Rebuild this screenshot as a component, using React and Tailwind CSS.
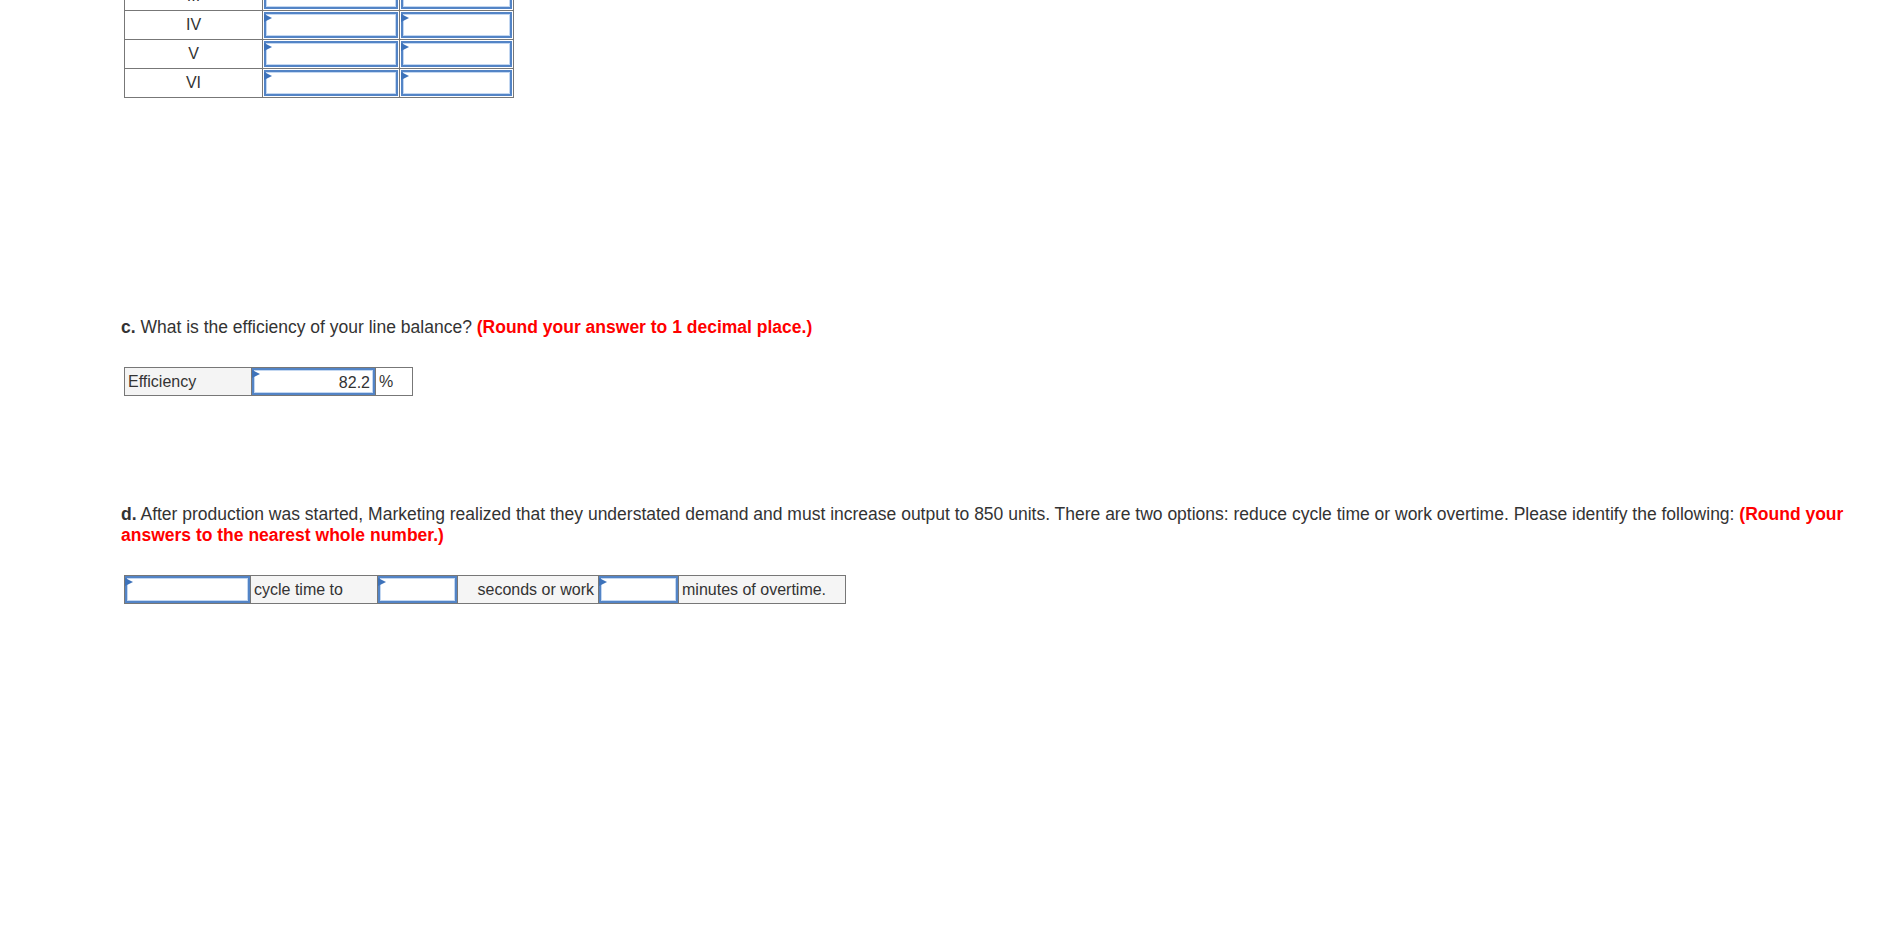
import React from 'react'

const font = { fontFamily: '"Liberation Sans", Arial, sans-serif' }

// campo de resposta azul com a setinha no canto
function Campo({ valor, className = '' }) {
  return (
    <div className={`relative h-full border-2 border-[#5384c6] bg-white shadow-[inset_0_0_0_1px_#c3d7f1] ${className}`}>
      <span className="absolute left-[-2px] top-0 z-10 h-0 w-0 border-y-[4px] border-l-[8px] border-y-transparent border-l-[#3d72ba]" />
      {valor && <span className="absolute right-[3px] top-[3px] text-[16px] leading-[20px] text-[#333]">{valor}</span>}
    </div>
  )
}

const linhas = ['III', 'IV', 'V', 'VI']

export default function App() {
  return (
    <div className="min-h-[925px] bg-white pl-[121px] pr-[30px] text-[16px] text-[#333]" style={font}>
      {/* Tabela de estações (parte de cima cortada) */}
      <table className="ml-[3px] mt-[-19px] border-collapse">
        <tbody>
          {linhas.map(l => (
            <tr key={l} className="h-[29px]">
              <td className="w-[138px] border border-[#777] p-0 text-center leading-[20px]">{l}</td>
              <td className="h-[29px] w-[137px] border border-[#777] p-px">
                <Campo />
              </td>
              <td className="h-[29px] w-[114px] border border-[#777] p-px">
                <Campo />
              </td>
            </tr>
          ))}
        </tbody>
      </table>

      {/* c. */}
      <p className="mt-[219px] text-[17.5px] leading-[21px]">
        <b>c.</b> What is the efficiency of your line balance?{' '}
        <b className="text-[#ff0000]">(Round your answer to 1 decimal place.)</b>
      </p>

      <div className="ml-[3px] mt-[29px] flex h-[29px] w-[289px] border border-[#777]">
        <div className="w-[127px] border-r border-[#777] bg-[#f4f4f4] pl-[3px] leading-[27px]">Efficiency</div>
        <div className="w-[124px] border-r border-[#777]">
          <Campo valor="82.2" />
        </div>
        <div className="flex-1 pl-[3px] leading-[27px]">%</div>
      </div>

      {/* d. */}
      <p className="mt-[108px] text-[17.5px] leading-[21px]">
        <b>d.</b> After production was started, Marketing realized that they understated demand and must increase output to 850 units. There are two options: reduce cycle time or work overtime. Please identify the following:{' '}
        <b className="text-[#ff0000]">(Round your answers to the nearest whole number.)</b>
      </p>

      <div className="ml-[3px] mt-[29px] flex h-[29px] w-[722px] border border-[#777]">
        <div className="w-[126px] border-r border-[#777]">
          <Campo />
        </div>
        <div className="w-[127px] border-r border-[#777] bg-[#f5f5f5] pl-[3px] leading-[27px]">cycle time to</div>
        <div className="w-[80px] border-r border-[#777]">
          <Campo />
        </div>
        <div className="w-[141px] border-r border-[#777] bg-[#f5f5f5] pr-[4px] text-right leading-[27px]">seconds or work</div>
        <div className="w-[80px] border-r border-[#777]">
          <Campo />
        </div>
        <div className="flex-1 bg-[#f5f5f5] pl-[3px] leading-[27px]">minutes of overtime.</div>
      </div>
    </div>
  )
}
